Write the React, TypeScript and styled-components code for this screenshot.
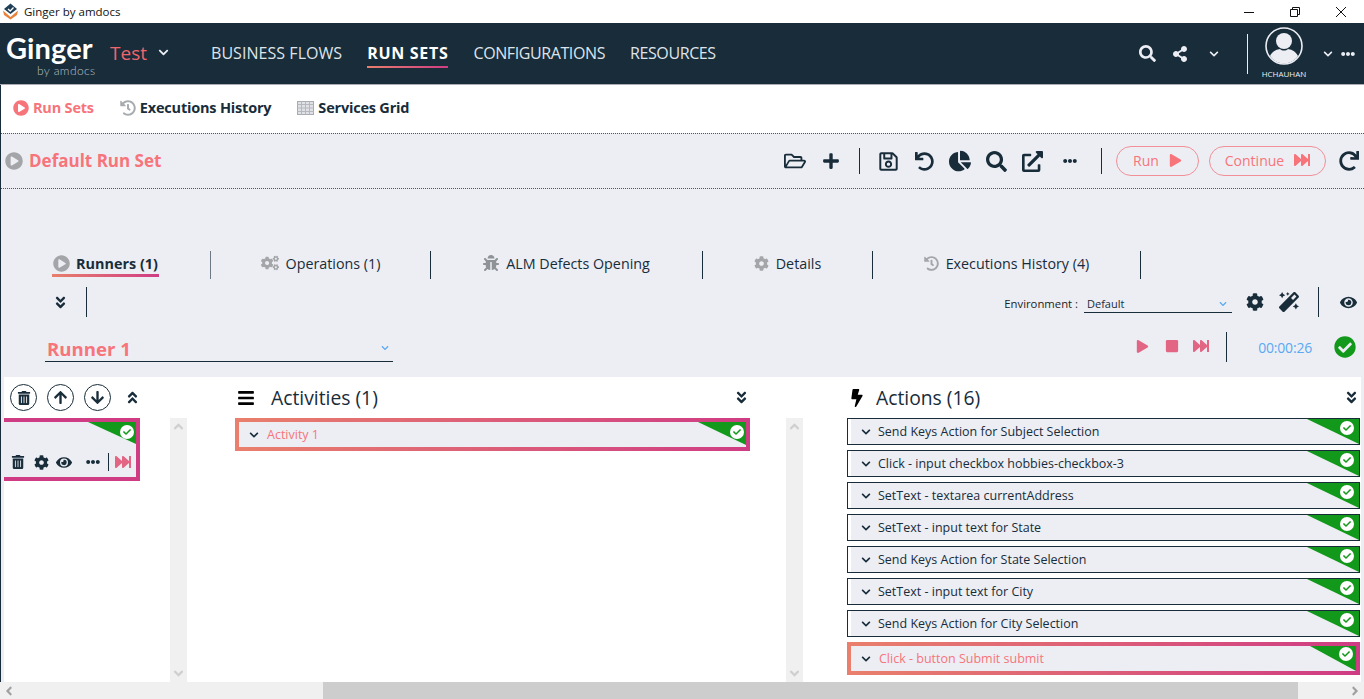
import React from "react";
import styled, { createGlobalStyle } from "styled-components";
import {
  FaAngleDoubleDown,
  FaAngleDoubleUp,
  FaAngleDown,
  FaAngleLeft,
  FaAngleRight,
  FaAngleUp,
  FaArrowDown,
  FaArrowUp,
  FaBars,
  FaBolt,
  FaBug,
  FaChartPie,
  FaCheck,
  FaCheckCircle,
  FaChevronDown,
  FaCog,
  FaCogs,
  FaEllipsisH,
  FaExternalLinkAlt,
  FaEye,
  FaFastForward,
  FaHistory,
  FaMagic,
  FaPlay,
  FaPlayCircle,
  FaPlus,
  FaRedo,
  FaRegFolderOpen,
  FaRegSave,
  FaSearch,
  FaShareAlt,
  FaStop,
  FaTrashAlt,
  FaUndo,
} from "react-icons/fa";

const navy = "#182c3a";
const salmon = "#f7747a";
const panel = "#eceef4";
const green = "#12981a";
const brand = "linear-gradient(90deg, #e97f6c, #cf3c84)";

const GlobalStyle = createGlobalStyle`
  html, body {
    margin: 0;
    padding: 0;
    background: #fff;
    overflow: hidden;
  }
  * { box-sizing: border-box; }
`;

const Page = styled.div`
  width: 1364px;
  height: 699px;
  display: flex;
  flex-direction: column;
  overflow: hidden;
  font-family: "Open Sans", "Noto Sans", sans-serif;
  color: ${navy};
`;

const TitleBar = styled.div`
  height: 23px;
  flex: none;
  display: flex;
  align-items: center;
  padding-left: 2px;
  font-size: 11.5px;
  color: #111;
  gap: 5px;
`;

const WindowButtons = styled.div`
  margin-left: auto;
  display: flex;
  align-items: center;
`;

const WindowButton = styled.div`
  width: 46px;
  height: 23px;
  display: flex;
  align-items: center;
  justify-content: center;
`;

const Nav = styled.div`
  height: 61px;
  flex: none;
  background: ${navy};
  display: flex;
  align-items: center;
  color: #eceef4;
`;

const Logo = styled.div`
  width: 110px;
  padding-left: 6px;
  display: flex;
  flex-direction: column;
  font-family: Lato, sans-serif;
  color: #fff;
`;

const LogoName = styled.div`
  font-size: 29px;
  line-height: 33px;
  font-weight: 700;
  letter-spacing: 0.1px;
`;

const LogoSub = styled.div`
  font-size: 12px;
  line-height: 13px;
  color: #b9c0c6;
  margin-left: 31px;
  font-weight: 300;
  letter-spacing: 0.4px;
`;

const Workspace = styled.div`
  width: 101px;
  display: flex;
  align-items: center;
  font-size: 19px;
  color: #f0666c;
  gap: 11px;
  padding-bottom: 2px;
`;

const NavLink = styled.div<{ $active?: boolean; $spacing: number }>`
  font-size: 16px;
  line-height: 26px;
  margin-right: 25px;
  letter-spacing: ${(p) => p.$spacing}px;
  font-weight: ${(p) => (p.$active ? 700 : 400)};
  color: ${(p) => (p.$active ? "#fff" : "#dfe4ea")};
  border-bottom: 2px solid transparent;
  border-image: ${(p) => (p.$active ? `${brand} 1` : "none")};
`;

const NavRight = styled.div`
  margin-left: auto;
  padding-right: 9px;
  display: flex;
  align-items: center;
  height: 100%;
`;

const NavIcon = styled.div<{ $w: number; $ml?: number }>`
  width: ${(p) => p.$w}px;
  margin-left: ${(p) => p.$ml ?? 0}px;
  flex: none;
  display: flex;
  justify-content: center;
  align-items: center;
`;

const NavDivider = styled.div`
  width: 1px;
  height: 40px;
  background: #eceef4;
  margin: 0 16px 0 15px;
`;

const User = styled.div`
  width: 40px;
  display: flex;
  flex-direction: column;
  align-items: center;
  font-size: 8px;
  line-height: 10px;
  padding-bottom: 2px;
  gap: 4px;
  white-space: nowrap;
`;

const Content = styled.div`
  flex: 1;
  display: flex;
  flex-direction: column;
  min-height: 0;
  border-left: 1px solid ${navy};
`;

const SubTabs = styled.div`
  height: 49px;
  flex: none;
  display: flex;
  align-items: center;
  border-top: 1px solid #a9adb3;
  padding: 0 0 3px 13px;
  gap: 26px;
  margin-left: -1px;
`;

const SubTab = styled.div<{ $active?: boolean }>`
  display: flex;
  align-items: center;
  gap: 4px;
  font-size: 14.5px;
  font-weight: 700;
  letter-spacing: -0.2px;
  color: ${(p) => (p.$active ? salmon : navy)};
`;

const Toolbar = styled.div`
  height: 56px;
  flex: none;
  display: flex;
  align-items: center;
  background: ${panel};
  border-top: 1px dotted #555;
  border-bottom: 1px dotted #555;
  padding-left: 4px;
`;

const RunSetName = styled.div`
  font-size: 17px;
  font-weight: 700;
  color: ${salmon};
  margin: 0 0 2px 6px;
`;

const ToolIcons = styled.div`
  margin-left: auto;
  display: flex;
  align-items: center;
`;

const ToolIcon = styled.div<{ $w?: number; $ml?: number }>`
  width: ${(p) => p.$w ?? 36}px;
  margin-left: ${(p) => p.$ml ?? 0}px;
  display: flex;
  justify-content: center;
  align-items: center;
  color: ${navy};
`;

const Divider = styled.div<{ $h?: number; $ml?: number; $mr?: number; $color?: string }>`
  width: 1px;
  height: ${(p) => p.$h ?? 26}px;
  margin-left: ${(p) => p.$ml ?? 0}px;
  margin-right: ${(p) => p.$mr ?? 0}px;
  background: ${(p) => p.$color ?? navy};
  flex: none;
`;

const Pill = styled.div<{ $w: number; $ml?: number }>`
  width: ${(p) => p.$w}px;
  margin-left: ${(p) => p.$ml ?? 0}px;
  height: 30px;
  padding-bottom: 2px;
  border: 1px solid #f19096;
  border-radius: 15px;
  display: flex;
  align-items: center;
  justify-content: center;
  gap: 10px;
  font-size: 14px;
  color: ${salmon};
  flex: none;
`;

const Main = styled.div`
  flex: 1;
  min-height: 0;
  background: ${panel};
  display: flex;
  flex-direction: column;
`;

const Tabs = styled.div`
  margin-top: 62px;
  height: 28px;
  display: grid;
  grid-template-columns: 210px 220px 272px 170px 268px;
`;

const Tab = styled.div`
  display: flex;
  align-items: center;
  justify-content: center;
  border-right: 1px solid ${navy};
  font-size: 14.3px;
  gap: 7px;
  padding-bottom: 4px;
  color: ${navy};
`;

const RunnersTab = styled.div`
  display: flex;
  align-items: flex-start;
  justify-content: center;
  border-right: 1px solid #6d7a85;
`;

const TabActive = styled.div`
  display: flex;
  align-items: center;
  gap: 6px;
  font-weight: 700;
  font-size: 14.4px;
  height: 26px;
  padding: 1px 1px 0;
  border-bottom: 3px solid transparent;
  border-image: ${brand} 1;
`;

const ControlRow = styled.div`
  height: 30px;
  margin-top: 8px;
  padding-right: 2px;
  display: flex;
  align-items: center;
`;

const Expander = styled.div`
  width: 85px;
  padding-left: 52px;
  display: flex;
`;

const EnvLabel = styled.div`
  margin-left: auto;
  padding-top: 2px;
  font-size: 11.3px;
  color: #222;
  margin-right: 6px;
`;

const EnvSelect = styled.div`
  width: 148px;
  height: 20px;
  margin-top: 1px;
  padding: 3px 5px 0 3px;
  border-bottom: 1px solid ${navy};
  display: flex;
  align-items: center;
  justify-content: space-between;
  font-size: 11px;
`;

const EnvIcons = styled.div`
  display: flex;
  align-items: center;
  margin-left: 5px;
`;

const EnvIcon = styled.div<{ $w: number }>`
  width: ${(p) => p.$w}px;
  display: flex;
  justify-content: center;
  color: ${navy};
`;

const RunnerRow = styled.div`
  height: 30px;
  margin-top: 15px;
  margin-bottom: 15px;
  display: flex;
  align-items: center;
  padding-left: 44px;
`;

const RunnerSelect = styled.div`
  width: 348px;
  height: 25px;
  margin-top: 5px;
  border-bottom: 1px solid ${navy};
  display: flex;
  align-items: center;
  justify-content: space-between;
  padding: 0 4px 2px 2px;
  font-size: 18.6px;
  font-weight: 700;
  color: ${salmon};
`;

const RunnerControls = styled.div`
  margin-left: auto;
  display: flex;
  align-items: center;
  color: #e26584;
`;

const RunnerButton = styled.div`
  width: 29px;
  display: flex;
  justify-content: center;
  padding-bottom: 2px;
`;

const Timer = styled.div`
  font-size: 14px;
  color: #5aa9f2;
  margin: 0 22px 0 31px;
  letter-spacing: -0.2px;
`;

const Panels = styled.div`
  flex: 1;
  min-height: 0;
  margin-left: 3px;
  margin-right: 3px;
  background: #fff;
  display: grid;
  grid-template-columns: 183px 616px 557px;
`;

const Column = styled.div`
  display: flex;
  flex-direction: column;
  min-height: 0;
`;

const LeftHead = styled.div`
  height: 41px;
  flex: none;
  display: flex;
  align-items: center;
  padding-left: 6px;
  gap: 10px;
`;

const RoundButton = styled.div`
  width: 27px;
  height: 27px;
  border-radius: 50%;
  border: 1px solid ${navy};
  display: flex;
  align-items: center;
  justify-content: center;
`;

const ListArea = styled.div`
  flex: 1;
  min-height: 0;
  display: flex;
`;

const ListBody = styled.div<{ $pad?: number }>`
  flex: 1;
  padding-left: ${(p) => p.$pad ?? 0}px;
`;

const VScroll = styled.div`
  width: 17px;
  flex: none;
  height: 264px;
  background: #f0f0f0;
  display: flex;
  flex-direction: column;
  justify-content: space-between;
  align-items: center;
  padding: 1px 0;
  color: #cfcfcf;
`;

const RunnerCard = styled.div`
  position: relative;
  width: 136px;
  height: 63px;
  background: ${panel};
  border: 4px solid #cf3c84;
  border-left: none;
  display: flex;
  align-items: flex-end;
  padding: 0 0 6px 6px;
`;

const CardTools = styled.div`
  display: flex;
  align-items: center;
  height: 18px;
`;

const CardTool = styled.div<{ $w: number; $pl?: number }>`
  width: ${(p) => p.$w}px;
  padding-left: ${(p) => p.$pl ?? 0}px;
  display: flex;
  justify-content: center;
`;

const Ribbon = styled.div<{ $w: number; $h: number }>`
  position: absolute;
  top: 0;
  right: 0;
  width: ${(p) => p.$w}px;
  height: ${(p) => p.$h}px;
  background: ${green};
  clip-path: polygon(0 0, 100% 0, 100% 100%);
`;

const RibbonCheck = styled.div<{ $right: number; $top: number }>`
  position: absolute;
  right: ${(p) => p.$right}px;
  top: ${(p) => p.$top}px;
  width: 14px;
  height: 14px;
  border-radius: 50%;
  background: #fff;
  display: flex;
  align-items: center;
  justify-content: center;
  color: ${green};
`;

const Head = styled.div`
  height: 41px;
  display: flex;
  align-items: center;
  font-size: 19.3px;
  color: ${navy};
`;

const HeadEnd = styled.div`
  margin-left: auto;
  display: flex;
`;

const Row = styled.div<{ $active?: boolean }>`
  position: relative;
  height: ${(p) => (p.$active ? 33 : 27)}px;
  background: ${panel};
  display: flex;
  align-items: center;
  font-size: 12.5px;
  gap: ${(p) => (p.$active ? 8 : 7)}px;
  margin-bottom: ${(p) => (p.$active ? 0 : 5)}px;
  border: ${(p) => (p.$active ? "4px solid transparent" : `1px solid ${navy}`)};
  border-image: ${(p) => (p.$active ? `${brand} 1` : "none")};
  padding-left: ${(p) => (p.$active ? 10 : 13)}px;
  color: ${(p) => (p.$active ? salmon : navy)};
  box-shadow: ${(p) => (p.$active ? "none" : "inset 3px 0 0 #fff")};
`;

const HScroll = styled.div`
  height: 17px;
  flex: none;
  margin-left: -1px;
  background: #f0f0f0;
  display: flex;
  align-items: center;
  color: #a0a0a0;
  padding: 0 2px;
`;

const HThumb = styled.div`
  width: 975px;
  height: 17px;
  background: #cdcdcd;
  margin-left: 307px;
  margin-right: auto;
`;

const ActionsBody = styled.div`
  padding-left: 44px;
  display: flex;
  flex-direction: column;
`;

const ActivitiesHead = styled(Head)`
  padding-left: 50px;
  gap: 16px;
  width: 562px;
`;

const ActionsHead = styled(Head)`
  padding-left: 45px;
  gap: 10px;
`;

const actions = [
  "Send Keys Action for Subject Selection",
  "Click - input checkbox hobbies-checkbox-3",
  "SetText - textarea currentAddress",
  "SetText - input text for State",
  "Send Keys Action for State Selection",
  "SetText - input text for City",
  "Send Keys Action for City Selection",
];

const RowRibbon: React.FC<{ active?: boolean }> = ({ active }) => (
  <>
    <Ribbon $w={active ? 46 : 52} $h={25} />
    <RibbonCheck $right={active ? 3 : 5} $top={active ? 1 : 2}>
      <FaCheck size={8} />
    </RibbonCheck>
  </>
);

const AppIcon = () => (
  <svg width="17" height="17" viewBox="0 0 17 17">
    <path d="M8.5 0.5 L15 6 L8.5 11 L2 6 Z" fill="#1f3f57" />
    <path d="M1 7.5 L8.5 14 L16 7.5 L15 12 L8.5 16.5 L2 12 Z" fill="#e8813a" />
    <path d="M6 6 L8.2 8 L11.5 4.5" stroke="#fff" strokeWidth="1.3" fill="none" />
  </svg>
);

const Avatar = () => (
  <svg width="38" height="38" viewBox="0 0 38 38">
    <circle cx="19" cy="19" r="18" fill="none" stroke="#eceef4" strokeWidth="1.6" />
    <circle cx="19" cy="14" r="8" fill="#eceef4" />
    <path d="M5 29 C8 23 13 22.5 15 22 C17 24 21 24 23 22 C25 22.5 30 23 33 29 C29 34.5 24 36.5 19 36.5 C14 36.5 9 34.5 5 29 Z" fill="#eceef4" />
  </svg>
);

const GridIcon = () => (
  <svg width="17" height="14" viewBox="0 0 17 14" fill="none" stroke="#a8acb0" strokeWidth="1">
    <rect x="0.5" y="0.5" width="16" height="13" fill="#dfe1e6" />
    <path d="M4.5 0.5V13.5M8.5 0.5V13.5M12.5 0.5V13.5M0.5 3.5H16.5M0.5 7H16.5M0.5 10.5H16.5" stroke="#b5b8bd" />
  </svg>
);

export default function App() {
  return (
    <Page>
      <GlobalStyle />
      <TitleBar>
        <AppIcon />
        <span>Ginger by amdocs</span>
        <WindowButtons>
          <WindowButton>
            <svg width="10" height="10" viewBox="0 0 10 10">
              <path d="M0 5.5H10" stroke="#111" strokeWidth="1" />
            </svg>
          </WindowButton>
          <WindowButton>
            <svg width="10" height="10" viewBox="0 0 10 10">
              <path d="M0.5 2.5H7.5V9.5H0.5Z M2.5 2.5V0.5H9.5V7.5H7.5" stroke="#111" strokeWidth="1" fill="none" />
            </svg>
          </WindowButton>
          <WindowButton>
            <svg width="10" height="10" viewBox="0 0 10 10">
              <path d="M0 0L10 10M10 0L0 10" stroke="#111" strokeWidth="1" />
            </svg>
          </WindowButton>
        </WindowButtons>
      </TitleBar>

      <Nav>
        <Logo>
          <LogoName>Ginger</LogoName>
          <LogoSub>by amdocs</LogoSub>
        </Logo>
        <Workspace>
          Test
          <FaChevronDown size={11} color="#eceef4" />
        </Workspace>
        <NavLink $spacing={0.05}>BUSINESS FLOWS</NavLink>
        <NavLink $active $spacing={0.7}>RUN SETS</NavLink>
        <NavLink $spacing={-0.4}>CONFIGURATIONS</NavLink>
        <NavLink $spacing={-0.4}>RESOURCES</NavLink>
        <NavRight>
          <NavIcon $w={34}><FaSearch size={17} /></NavIcon>
          <NavIcon $w={32}><FaShareAlt size={16} /></NavIcon>
          <NavIcon $w={36}><FaChevronDown size={10} /></NavIcon>
          <NavDivider />
          <User>
            <Avatar />
            <span>HCHAUHAN</span>
          </User>
          <NavIcon $w={26} $ml={11}><FaChevronDown size={10} /></NavIcon>
          <NavIcon $w={14}><FaEllipsisH size={14} /></NavIcon>
        </NavRight>
      </Nav>

      <Content>
        <SubTabs>
          <SubTab $active>
            <FaPlayCircle size={16} color={salmon} /> Run Sets
          </SubTab>
          <SubTab>
            <FaHistory size={16} color="#a8acb0" /> Executions History
          </SubTab>
          <SubTab>
            <GridIcon /> Services Grid
          </SubTab>
        </SubTabs>

        <Toolbar>
          <FaPlayCircle size={18} color="#a3a5a8" />
          <RunSetName>Default Run Set</RunSetName>
          <ToolIcons>
            <ToolIcon><FaRegFolderOpen size={22} /></ToolIcon>
            <ToolIcon><FaPlus size={18} /></ToolIcon>
            <Divider $ml={10} $mr={10} />
            <ToolIcon><FaRegSave size={21} /></ToolIcon>
            <ToolIcon><FaUndo size={19} /></ToolIcon>
            <ToolIcon><FaChartPie size={22} /></ToolIcon>
            <ToolIcon><FaSearch size={21} /></ToolIcon>
            <ToolIcon><FaExternalLinkAlt size={21} /></ToolIcon>
            <ToolIcon $w={40}><FaEllipsisH size={14} /></ToolIcon>
            <Divider $ml={11} $mr={14} />
            <Pill $w={83}>Run <FaPlay size={13} /></Pill>
            <Pill $w={117} $ml={10}>Continue <FaFastForward size={16} /></Pill>
            <ToolIcon $w={30} $ml={8}><FaRedo size={20} /></ToolIcon>
          </ToolIcons>
        </Toolbar>

        <Main>
          <Tabs>
            <RunnersTab>
              <TabActive>
                <FaPlayCircle size={17} color="#a3a5a8" /> Runners (1)
              </TabActive>
            </RunnersTab>
            <Tab>
              <FaCogs size={18} color="#a3a5a8" /> Operations (1)
            </Tab>
            <Tab>
              <FaBug size={16} color="#8f9296" /> ALM Defects Opening
            </Tab>
            <Tab>
              <FaCog size={15} color="#a3a5a8" /> Details
            </Tab>
            <Tab>
              <FaHistory size={15} color="#a3a5a8" /> Executions History (4)
            </Tab>
          </Tabs>

          <ControlRow>
            <Expander><FaAngleDoubleDown size={15} /></Expander>
            <Divider $h={30} />
            <EnvLabel>Environment :</EnvLabel>
            <EnvSelect>
              Default
              <FaChevronDown size={8} color="#5aa9f2" />
            </EnvSelect>
            <EnvIcons>
              <EnvIcon $w={36}><FaCog size={18} /></EnvIcon>
              <EnvIcon $w={32}><FaMagic size={20} /></EnvIcon>
              <Divider $h={30} $ml={13} $mr={15} />
              <EnvIcon $w={28}><FaEye size={17} /></EnvIcon>
            </EnvIcons>
          </ControlRow>

          <RunnerRow>
            <RunnerSelect>
              Runner 1
              <FaChevronDown size={8} color="#5aa9f2" />
            </RunnerSelect>
            <RunnerControls>
              <RunnerButton><FaPlay size={13} /></RunnerButton>
              <RunnerButton><FaStop size={14} /></RunnerButton>
              <RunnerButton><FaFastForward size={16} /></RunnerButton>
              <Divider $h={30} $ml={11} />
              <Timer>00:00:26</Timer>
              <FaCheckCircle size={22} color={green} />
              <NavIcon $w={8} />
            </RunnerControls>
          </RunnerRow>

          <Panels>
            <Column>
              <LeftHead>
                <RoundButton><FaTrashAlt size={14} /></RoundButton>
                <RoundButton><FaArrowUp size={15} /></RoundButton>
                <RoundButton><FaArrowDown size={15} /></RoundButton>
                <FaAngleDoubleUp size={15} style={{ marginLeft: 4 }} />
              </LeftHead>
              <ListArea>
                <ListBody>
                  <RunnerCard>
                    <Ribbon $w={48} $h={22} />
                    <RibbonCheck $right={2} $top={3}>
                      <FaCheck size={8} />
                    </RibbonCheck>
                    <CardTools>
                      <CardTool $w={16}><FaTrashAlt size={14} /></CardTool>
                      <CardTool $w={30}><FaCog size={15} /></CardTool>
                      <CardTool $w={16}><FaEye size={17} /></CardTool>
                      <CardTool $w={36} $pl={6}><FaEllipsisH size={14} /></CardTool>
                      <Divider $h={18} />
                      <CardTool $w={27}><FaFastForward size={16} color="#e26584" /></CardTool>
                    </CardTools>
                  </RunnerCard>
                </ListBody>
                <VScroll>
                  <FaAngleUp size={15} />
                  <FaAngleDown size={15} />
                </VScroll>
              </ListArea>
            </Column>

            <Column>
              <ActivitiesHead>
                <FaBars size={18} color="#000" />
                Activities (1)
                <HeadEnd><FaAngleDoubleDown size={15} /></HeadEnd>
              </ActivitiesHead>
              <ListArea>
                <ListBody $pad={48}>
                  <Row $active style={{ width: 515 }}>
                    <FaChevronDown size={10} color={navy} />
                    Activity 1
                    <Ribbon $w={48} $h={23} />
                    <RibbonCheck $right={2} $top={3}>
                      <FaCheck size={8} />
                    </RibbonCheck>
                  </Row>
                </ListBody>
                <VScroll>
                  <FaAngleUp size={15} />
                  <FaAngleDown size={15} />
                </VScroll>
              </ListArea>
            </Column>

            <Column>
              <ActionsHead>
                <FaBolt size={18} color="#000" />
                Actions (16)
                <HeadEnd><FaAngleDoubleDown size={15} style={{ marginRight: 1 }} /></HeadEnd>
              </ActionsHead>
              <ActionsBody>
                {actions.map((a) => (
                  <Row key={a}>
                    <FaChevronDown size={10} color={navy} />
                    {a}
                    <RowRibbon />
                  </Row>
                ))}
                <Row $active>
                  <FaChevronDown size={10} color={navy} />
                  Click - button Submit submit
                  <RowRibbon active />
                </Row>
              </ActionsBody>
            </Column>
          </Panels>

          <HScroll>
            <FaAngleLeft size={14} />
            <HThumb />
            <FaAngleRight size={14} />
          </HScroll>
        </Main>
      </Content>
    </Page>
  );
}
